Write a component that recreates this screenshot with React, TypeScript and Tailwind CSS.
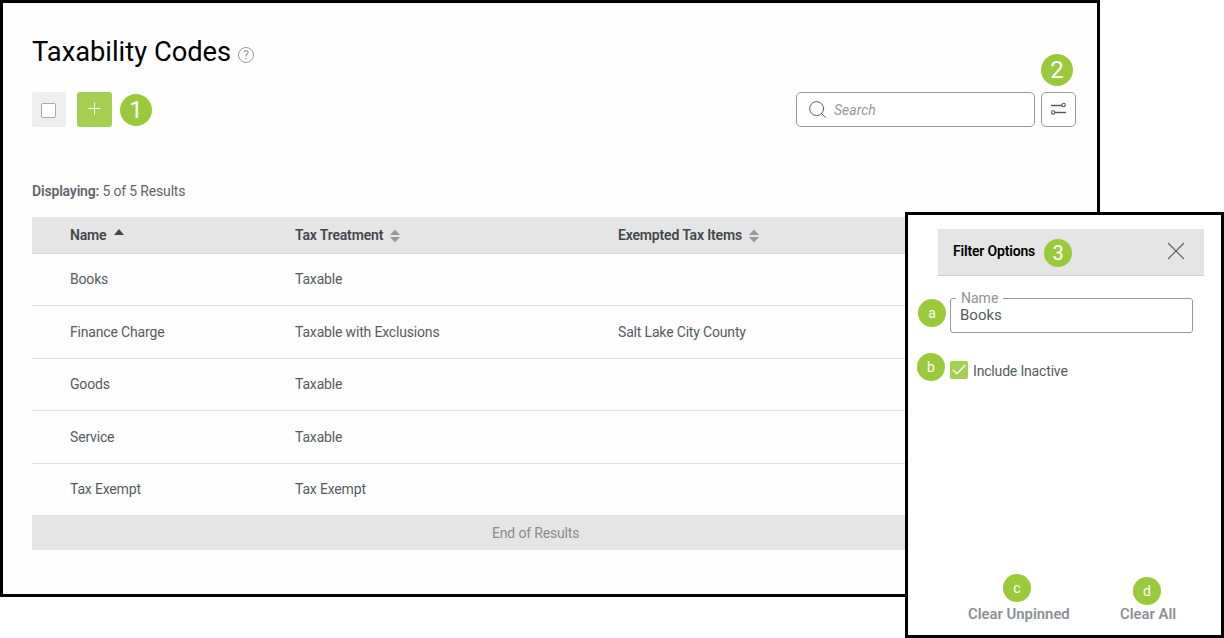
import React from 'react';
import { Plus, Search, X, Check } from 'lucide-react';

const rows = [
  { name: 'Books', treatment: 'Taxable', items: '', h: 'h-[52px]' },
  { name: 'Finance Charge', treatment: 'Taxable with Exclusions', items: 'Salt Lake City County', h: 'h-[53px]' },
  { name: 'Goods', treatment: 'Taxable', items: '', h: 'h-[52px]' },
  { name: 'Service', treatment: 'Taxable', items: '', h: 'h-[53px]' },
  { name: 'Tax Exempt', treatment: 'Tax Exempt', items: '', h: 'h-[52px]' },
];

function Badge({ label, className }: { label: string; className: string }) {
  return (
    <span className={`absolute flex h-[28px] w-[28px] items-center justify-center rounded-full bg-[#9aca3c] tracking-normal text-white ${className}`}>
      {label}
    </span>
  );
}

function SortIcon() {
  return (
    <svg width="10" height="14" viewBox="0 0 10 14" className="ml-[7px] mt-[1px]">
      <path d="M5 0.5 L10 6 H0 Z" fill="#9a9a9a" />
      <path d="M5 13.5 L10 8 H0 Z" fill="#9a9a9a" />
    </svg>
  );
}

function FilterIcon() {
  return (
    <svg width="17" height="14" viewBox="0 0 17 14" fill="none" stroke="#555" strokeWidth="1.4">
      <path d="M1 3.5 H12" />
      <circle cx="13.6" cy="3" r="1.7" strokeWidth="1.1" />
      <path d="M5 10.5 H16" />
      <circle cx="3.2" cy="10.5" r="1.7" strokeWidth="1.1" />
    </svg>
  );
}

function HelpIcon() {
  return (
    <span className="ml-[7px] mt-[6px] flex h-[16px] w-[16px] items-center justify-center rounded-full border border-[#999] text-[12px] leading-none tracking-normal text-[#999]">
      ?
    </span>
  );
}

export default function App() {
  return (
    <div className="relative h-[638px] w-[1224px] overflow-hidden bg-white font-['Roboto',sans-serif] text-[14px] tracking-[-0.17px] text-[#555b63]">
      <div className="relative h-[597px] w-[1100px] border-[3px] border-black bg-[#fefefe] pl-[29px] pr-[21px] pt-[33px]">
        <div className="flex h-[32px] items-center">
          <h1 className="text-[27.3px] font-normal leading-[32px] tracking-normal text-black">Taxability Codes</h1>
          <HelpIcon />
        </div>

        <div className="relative mt-[24px] flex h-[35px] items-center">
          <div className="flex h-[35px] w-[34px] items-center justify-center rounded-[2px] bg-[#eeeeee] pr-[1px] pt-[1px]">
            <span className="h-[15px] w-[15px] rounded-[2px] border border-[#aaa] bg-white" />
          </div>
          <div className="ml-[11px] flex h-[35px] w-[35px] items-center justify-center rounded-[3px] bg-[#a5cf50] pb-[2px]">
            <Plus size={19} strokeWidth={1.25} className="text-white" />
          </div>
          <Badge label="1" className="left-[88px] top-[2px] h-[32px] w-[32px] text-[24px]" />
          <div className="ml-auto flex h-[35px] w-[239px] items-center rounded-[5px] border border-[#999] bg-white pl-[10px]">
            <Search size={21} strokeWidth={1.1} className="text-[#555]" />
            <span className="ml-[6px] mt-[2px] italic tracking-normal text-[#999]">Search</span>
          </div>
          <div className="ml-[6px] flex h-[35px] w-[35px] items-center justify-center rounded-[5px] border border-[#999] bg-white pb-[2px]">
            <FilterIcon />
          </div>
          <Badge label="2" className="left-[1009px] top-[-38px] h-[32px] w-[32px] text-[24px]" />
        </div>

        <p className="mt-[56px] h-[17px] leading-[17px] text-[#5f656c]">
          <span className="font-semibold">Displaying:</span> 5 of 5 Results
        </p>

        <div className="mt-[17px]">
          <div className="flex h-[37px] items-center border-b border-[#d8d8d8] bg-[#e5e5e5] pl-[38px] font-semibold text-[#43474c]">
            <div className="flex w-[225px] items-center">
              Name
              <svg width="10" height="6" viewBox="0 0 10 6" className="ml-[8px] mb-[6px]">
                <path d="M5 0 L10 6 H0 Z" fill="#43474c" />
              </svg>
            </div>
            <div className="flex w-[323px] items-center">
              Tax Treatment
              <SortIcon />
            </div>
            <div className="flex items-center">
              Exempted Tax Items
              <SortIcon />
            </div>
          </div>
          {rows.map((row) => (
            <div key={row.name} className={`flex items-center border-b border-[#e0e0e0] pl-[38px] ${row.h}`}>
              <div className="w-[225px]">{row.name}</div>
              <div className="w-[323px]">{row.treatment}</div>
              <div>{row.items}</div>
            </div>
          ))}
          <div className="flex h-[34px] items-center bg-[#e5e5e5] pl-[460px] text-[#8b8b8b]">End of Results</div>
        </div>
      </div>

      <div className="absolute left-[905px] top-[212px] flex h-[426px] w-[319px] flex-col border-[3px] border-black bg-white">
        <div className="relative ml-[30px] mt-[14px] flex h-[47px] w-[266px] items-center justify-between border-b border-[#cfcfcf] bg-[#e5e5e5] pl-[15px] pr-[13px]">
          <span className="mb-[1px] font-semibold text-black">Filter Options</span>
          <X size={30} strokeWidth={1} className="mb-[3px] text-[#666]" />
          <Badge label="3" className="left-[106px] top-[10px] text-[20px]" />
        </div>

        <div className="relative ml-[42px] mt-[22px] flex h-[35px] w-[243px] items-center rounded-[3px] border border-[#999] pb-[1px] pl-[9px] text-[15px] tracking-normal">
          Books
          <span className="absolute left-[5px] top-[-8px] bg-white px-[5px] text-[14px] leading-[14px] text-[#8d9298]">Name</span>
          <Badge label="a" className="left-[-33px] top-[0px] text-[14px]" />
        </div>

        <div className="relative ml-[42px] mt-[28px] flex h-[18px] items-center">
          <span className="flex h-[18px] w-[18px] items-center justify-center rounded-[2px] bg-[#a5cf50]">
            <Check size={18} strokeWidth={1.8} className="text-white" />
          </span>
          <span className="ml-[5px] mt-[3px]">Include Inactive</span>
          <Badge label="b" className="left-[-33px] top-[-8px] text-[14px]" />
        </div>

        <div className="relative mt-auto flex h-[36px] font-semibold tracking-normal text-[#8b9096]">
          <span className="absolute left-[60px] top-[4px] text-[14.85px]">Clear Unpinned</span>
          <span className="absolute left-[212px] top-[4px] text-[14.85px]">Clear All</span>
          <Badge label="c" className="left-[95px] top-[-25px] text-[14px] font-normal" />
          <Badge label="d" className="left-[225px] top-[-22px] text-[14px] font-normal" />
        </div>
      </div>
    </div>
  );
}
